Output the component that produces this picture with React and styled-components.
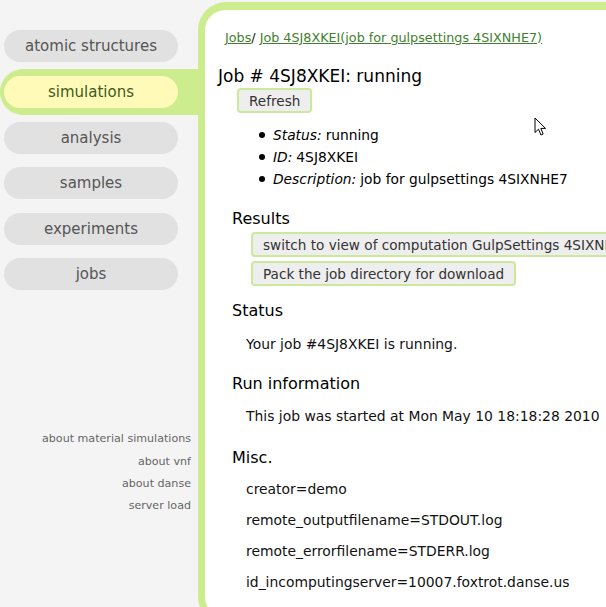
import React from "react";
import styled, { createGlobalStyle } from "styled-components";

const Global = createGlobalStyle`
  html, body { margin: 0; padding: 0; overflow: hidden; }
  body {
    background: #f4f4f4;
    font-family: "DejaVu Sans", Verdana, sans-serif;
    width: 606px;
    height: 607px;
  }
  * { box-sizing: border-box; }
`;

const Page = styled.div`
  display: flex;
  align-items: flex-start;
  width: 606px;
  height: 607px;
  overflow: hidden;
  position: relative;
`;

const Sidebar = styled.nav`
  width: 198px;
  flex: none;
  display: flex;
  flex-direction: column;
  padding-top: 23.6px;
`;

const NavItem = styled.div`
  padding: 6.8px 0 6.8px 4px;
  width: ${(p) => (p.$active ? "198px" : "178px")};
  background: ${(p) => (p.$active ? "#ccec8e" : "transparent")};
  border-radius: 23px 0 0 23px;
`;

const Pill = styled.a`
  display: block;
  width: 174px;
  height: 32px;
  line-height: 32px;
  border-radius: 16px;
  text-align: center;
  font-size: 15px;
  text-decoration: none;
  background: ${(p) => (p.$active ? "#fffab8" : "#e1e1e1")};
  color: ${(p) => (p.$active ? "#3f5a22" : "#555555")};
`;

const FootLinks = styled.div`
  margin-top: 131px;
  padding-right: 7px;
  display: flex;
  flex-direction: column;
  align-items: flex-end;
`;

const FootLink = styled.a`
  font-size: 11.1px;
  line-height: 22.4px;
  color: #666666;
  text-decoration: none;
  white-space: nowrap;
`;

const Panel = styled.main`
  flex: none;
  margin-top: 2px;
  width: 420px;
  height: 623px;
  background: #ffffff;
  border-top: 8px solid #ccec8e;
  border-left: 7px solid #ccec8e;
  border-bottom: 8px solid #ccec8e;
  border-radius: 28px 0 0 28px;
  padding: 20px 0 0 13px;
  color: #111111;
`;

const Crumbs = styled.div`
  margin-left: 7px;
  font-size: 12.75px;
  line-height: 16px;
  white-space: nowrap;
`;

const CrumbLink = styled.a`
  color: #3f7f2f;
  text-decoration: underline;
`;

const Title = styled.h1`
  margin: 20px 0 0;
  font-size: 17px;
  font-weight: normal;
  line-height: 20px;
  color: #000;
  white-space: nowrap;
`;

const Button = styled.button`
  display: block;
  height: 25px;
  padding: 0 10px;
  font-family: "DejaVu Sans", Verdana, sans-serif;
  font-size: 13.6px;
  color: #333333;
  background: #eeeeee;
  border: 2px solid #cbe99b;
  border-radius: 4px;
  white-space: nowrap;
  margin: ${(p) => p.$m || "0"};
`;

const Facts = styled.ul`
  list-style: none;
  margin: 11px 0 0 41px;
  padding: 0;
`;

const Fact = styled.li`
  display: flex;
  align-items: center;
  font-size: 13.8px;
  line-height: 22px;
  color: #000;
  white-space: nowrap;
`;

const Dot = styled.span`
  width: 6px;
  height: 6px;
  border-radius: 50%;
  background: #000;
  margin-right: 8px;
  flex: none;
`;

const Label = styled.em`
  font-style: italic;
  margin-right: 4px;
`;

const Section = styled.section`
  margin: ${(p) => p.$top}px 0 0 14px;
`;

const SectionTitle = styled.h2`
  margin: 0;
  font-size: 16px;
  font-weight: normal;
  line-height: 20px;
  color: #000;
`;

const Actions = styled.div`
  margin: 3px 0 0 19px;
  display: flex;
  flex-direction: column;
  align-items: flex-start;
  gap: 4px;
`;

const Para = styled.p`
  margin: ${(p) => p.$top}px 0 0 14px;
  font-size: 13.9px;
  line-height: 16px;
  color: #111;
  white-space: nowrap;
`;

const Cursor = styled.svg`
  position: absolute;
  left: 534px;
  top: 117px;
`;

const navItems = [
  "atomic structures",
  "simulations",
  "analysis",
  "samples",
  "experiments",
  "jobs",
];

const misc = [
  "creator=demo",
  "remote_outputfilename=STDOUT.log",
  "remote_errorfilename=STDERR.log",
  "id_incomputingserver=10007.foxtrot.danse.us",
];

export default function App() {
  return (
    <Page>
      <Global />
      <Sidebar>
        {navItems.map((n) => (
          <NavItem key={n} $active={n === "simulations"}>
            <Pill $active={n === "simulations"}>{n}</Pill>
          </NavItem>
        ))}
        <FootLinks>
          <FootLink>about material simulations</FootLink>
          <FootLink>about vnf</FootLink>
          <FootLink>about danse</FootLink>
          <FootLink>server load</FootLink>
        </FootLinks>
      </Sidebar>
      <Panel>
        <Crumbs>
          <CrumbLink>Jobs</CrumbLink>/{" "}
          <CrumbLink>Job 4SJ8XKEI(job for gulpsettings 4SIXNHE7)</CrumbLink>
        </Crumbs>
        <Title>Job # 4SJ8XKEI: running</Title>
        <Button $m="2px 0 0 19px">Refresh</Button>
        <Facts>
          <Fact>
            <Dot />
            <Label>Status:</Label> running
          </Fact>
          <Fact>
            <Dot />
            <Label>ID:</Label> 4SJ8XKEI
          </Fact>
          <Fact>
            <Dot />
            <Label>Description:</Label> job for gulpsettings 4SIXNHE7
          </Fact>
        </Facts>
        <Section $top={19}>
          <SectionTitle>Results</SectionTitle>
          <Actions>
            <Button>switch to view of computation GulpSettings 4SIXNHE7</Button>
            <Button>Pack the job directory for download</Button>
          </Actions>
        </Section>
        <Section $top={15}>
          <SectionTitle>Status</SectionTitle>
          <Para $top={15}>Your job #4SJ8XKEI is running.</Para>
        </Section>
        <Section $top={22}>
          <SectionTitle>Run information</SectionTitle>
          <Para $top={14}>This job was started at Mon May 10 18:18:28 2010</Para>
        </Section>
        <Section $top={24}>
          <SectionTitle>Misc.</SectionTitle>
          {misc.map((m, i) => (
            <Para key={m} $top={i === 0 ? 13 : 15}>
              {m}
            </Para>
          ))}
        </Section>
      </Panel>
      <Cursor width="13" height="20" viewBox="0 0 13 20">
        <path
          d="M1 1 L1 15.5 L4.5 12.2 L7 18 L9.2 17 L6.8 11.4 L11.5 11.4 Z"
          fill="#fff"
          stroke="#000"
          strokeWidth="1"
          strokeLinejoin="round"
        />
      </Cursor>
    </Page>
  );
}
